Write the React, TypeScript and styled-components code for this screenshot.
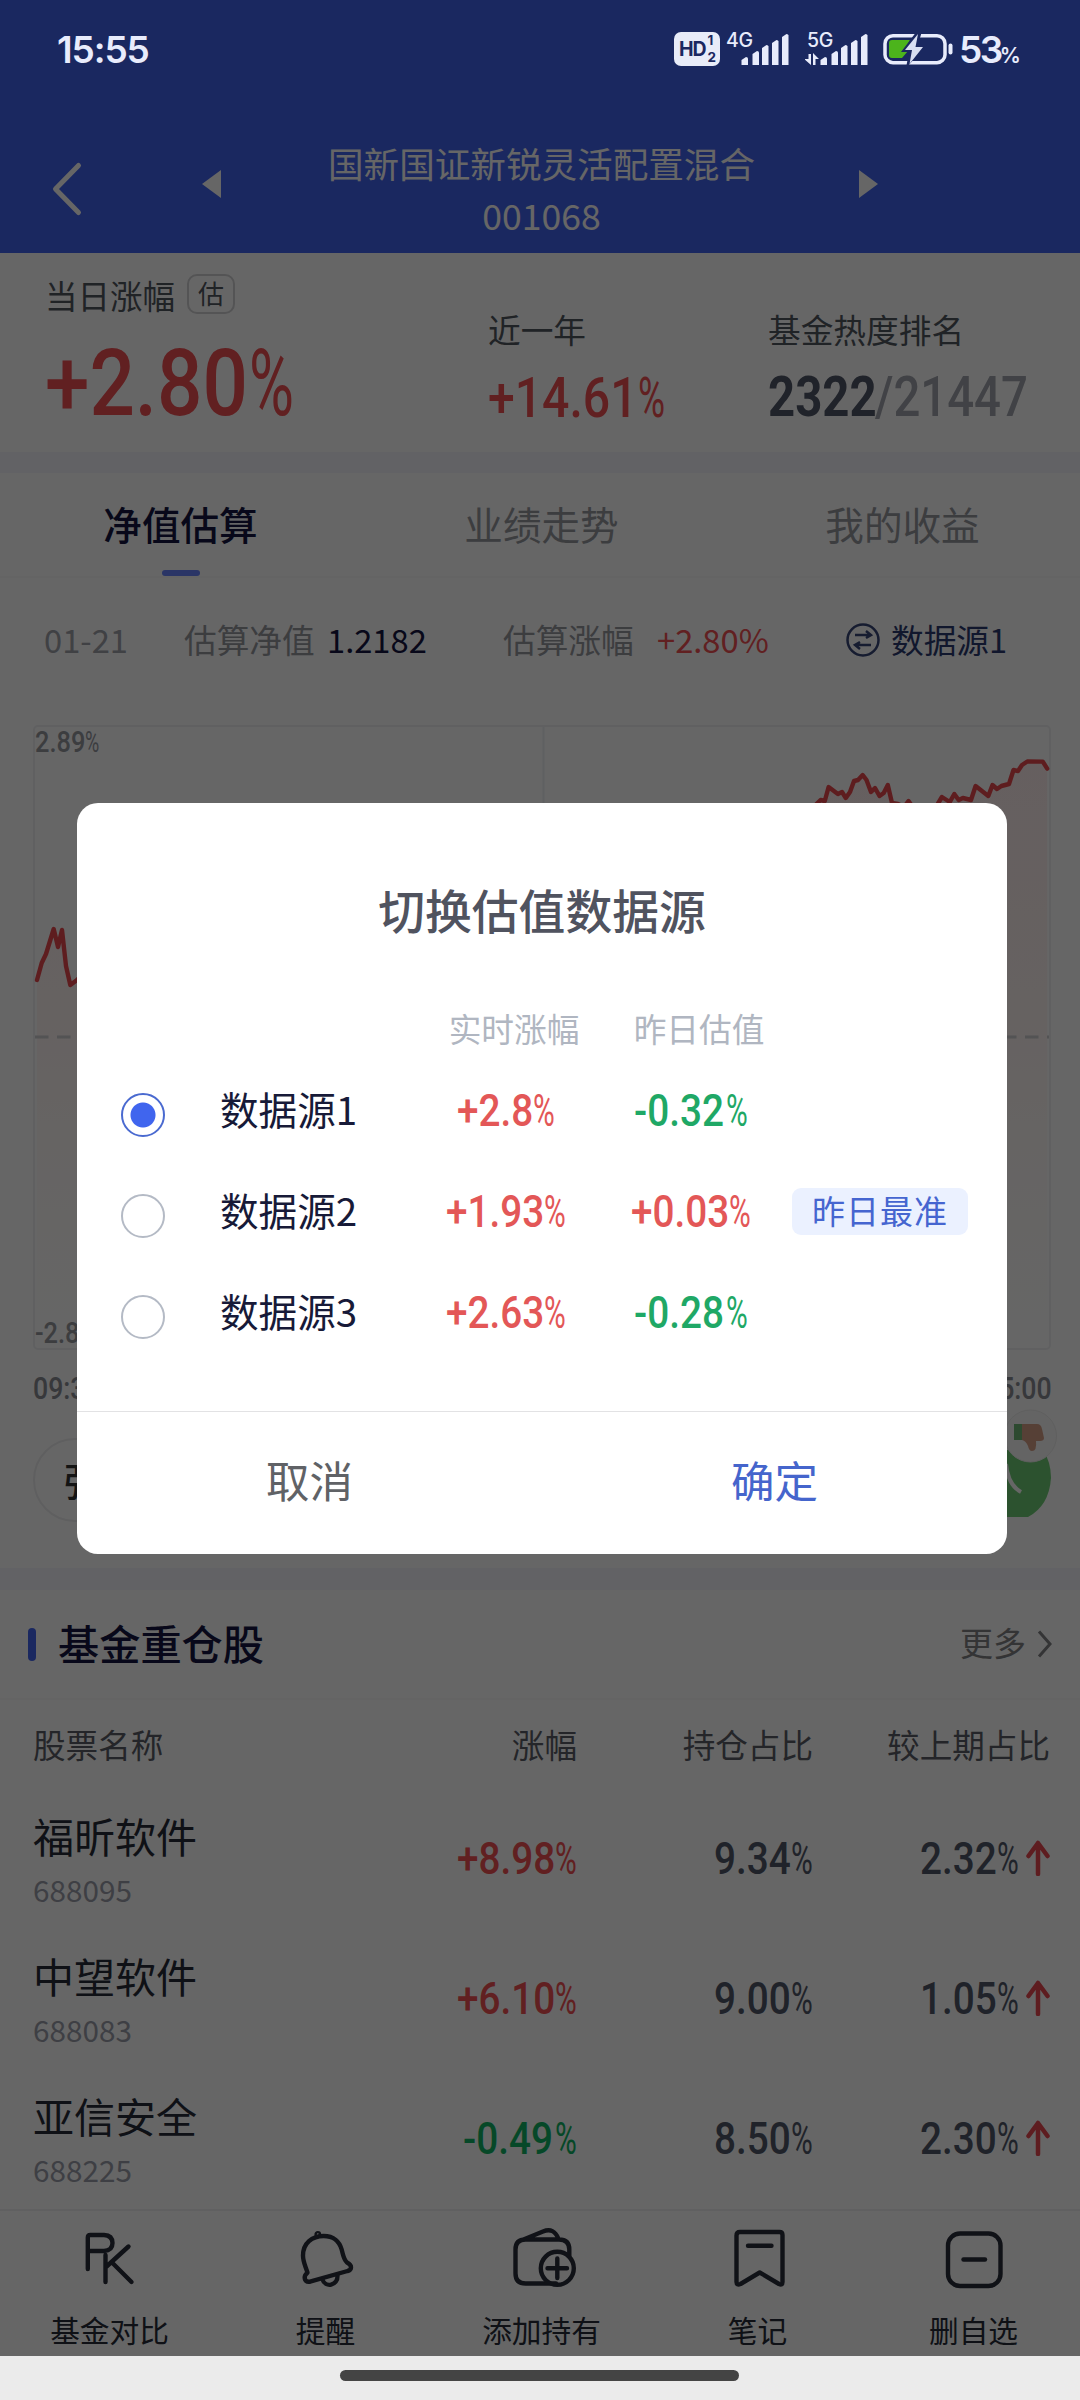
import React from "react";
import styled, { createGlobalStyle } from "styled-components";

const GlobalStyle = createGlobalStyle`
  * { box-sizing: border-box; }
  body { margin: 0; background: #ebebeb; }
`;

const cjk = `"Noto Sans CJK SC", "Noto Sans", sans-serif`;
const RED = "#f25054";
const GREEN = "#0fb464";

const Phone = styled.div`
  position: relative;
  width: 1080px;
  height: 2400px;
  overflow: hidden;
  font-family: ${cjk};
  background: #ebebeb;
  display: flex;
  flex-direction: column;
`;
const Page = styled.div`
  height: 2356px;
  background: #fff;
  display: flex;
  flex-direction: column;
`;
const Text = styled.span<{ $size: number; $color: string; $weight?: number }>`
  font-size: ${(p) => p.$size}px;
  color: ${(p) => p.$color};
  font-weight: ${(p) => p.$weight ?? 400};
  line-height: 1.2;
  white-space: nowrap;
`;

/* Condensed figures */
const advance = (s: string) =>
  [...s].reduce((w, c) => w + (c === "." ? 0.27 : c === "+" ? 0.56 : c === "-" ? 0.4 : c === ":" ? 0.25 : c === "/" ? 0.4 : c === "%" ? 0.735 : 0.565), 0);
const Figure = styled.span<{ $size: number; $color: string; $weight: number }>`
  display: inline-flex;
  gap: 0.02em;
  font-family: Roboto, sans-serif;
  font-size: ${(p) => p.$size}px;
  line-height: 1;
  font-weight: ${(p) => p.$weight};
  color: ${(p) => p.$color};
  white-space: nowrap;
`;
const Squeeze = styled.span<{ $w: number; $s: number; $light?: boolean }>`
  display: block;
  width: ${(p) => p.$w * p.$s}em;
  transform: scaleX(${(p) => p.$s});
  transform-origin: 0 50%;
  ${(p) => (p.$light ? "font-weight: 400;" : "")}
`;
function Num({ v, size = 45, color, weight = 500 }: { v: string; size?: number; color: string; weight?: number }) {
  const pct = v.endsWith("%");
  const body = pct ? v.slice(0, -1) : v;
  return (
    <Figure $size={size} $color={color} $weight={weight}>
      <Squeeze $w={advance(body)} $s={0.86}>{body}</Squeeze>
      {pct && <Squeeze $w={advance("%")} $s={0.66} $light>%</Squeeze>}
    </Figure>
  );
}

/* Header */
const Header = styled.header`
  height: 253px;
  background: #4364f0;
  display: flex;
  padding: 130px 0 0 51px;
`;
const BackIcon = styled.svg`
  width: 32px;
  height: 56px;
  margin-top: 31px;
`;
const FundNav = styled.div`
  display: flex;
  width: 676px;
  margin-left: 119px;
  justify-content: space-between;
`;
const Arrow = styled.svg`
  width: 19px;
  height: 28px;
  margin-top: 40px;
`;
const FundName = styled.div`
  display: flex;
  flex-direction: column;
  align-items: center;
  color: #fff;
  font-size: 35.6px;
  line-height: 52px;
  padding: 7px 0 0 3px;
`;

/* Summary */
const Summary = styled.section`
  height: 199px;
  display: grid;
  grid-template-columns: 443px 280px 1fr;
  padding-left: 45px;
`;
const SummaryCell = styled.div<{ $top: number }>`
  padding-top: ${(p) => p.$top}px;
  display: flex;
  flex-direction: column;
  align-items: flex-start;
`;
const LabelLine = styled.div`
  display: flex;
  align-items: center;
  height: 40px;
`;
const Tag = styled.span`
  width: 48px;
  height: 40px;
  margin-left: 12px;
  border: 2px solid #d2d2d4;
  border-radius: 10px;
  font-size: 26px;
  line-height: 34px;
  text-align: center;
  color: #52575f;
`;
const Value = styled.div<{ $mt: number }>`
  display: flex;
  margin-top: ${(p) => p.$mt}px;
`;
const Band = styled.div<{ $h: number }>`
  height: ${(p) => p.$h}px;
  flex: none;
  background: #f5f5fc;
`;

/* Tabs */
const Tabs = styled.nav`
  height: 105px;
  display: grid;
  grid-template-columns: repeat(3, 361px);
  border-bottom: 2px solid #f9f9fb;
`;
const Tab = styled.div<{ $on?: boolean }>`
  display: flex;
  flex-direction: column;
  align-items: center;
  justify-content: space-between;
  padding-top: 22px;
  font-size: 38.6px;
  line-height: 56px;
  font-weight: ${(p) => (p.$on ? 500 : 400)};
  color: ${(p) => (p.$on ? "#141641" : "#96989f")};
`;
const TabMark = styled.i`
  width: 38px;
  height: 6px;
  border-radius: 3px;
  background: #6986ff;
`;

/* Estimate */
const InfoRow = styled.div`
  height: 147px;
  display: grid;
  grid-template-columns: 140px 143px 176px 154px 189px 45px auto;
  align-items: start;
  justify-content: start;
  padding: 41px 0 0 44px;
`;
const SwapIcon = styled.svg`
  width: 34px;
  height: 34px;
  margin-top: 4px;
`;
const Chart = styled.div`
  width: 1018px;
  height: 625px;
  margin-left: 33px;
  border: 2px solid #f0f1f3;
  border-radius: 5px;
  display: grid;
`;
const ChartDrawing = styled.svg`
  grid-area: 1 / 1;
  width: 1014px;
  height: 621px;
  overflow: visible;
`;
const ChartLabels = styled.div`
  grid-area: 1 / 1;
  display: flex;
  flex-direction: column;
  justify-content: space-between;
  padding: 1px 0 0;
`;
const Times = styled.div`
  display: flex;
  justify-content: space-between;
  margin: 23px 29px 0 33px;
  height: 31px;
`;
const Votes = styled.div`
  display: flex;
  justify-content: space-between;
  margin: 34px 29px 0 33px;
  height: 130px;
`;
const UpVote = styled.div`
  width: 460px;
  height: 84px;
  border-radius: 42px;
  border: 2px solid #eeeeef;
  padding-left: 29px;
  font-size: 38.6px;
  font-weight: 500;
  line-height: 78px;
  color: #333;
`;
const DownVote = styled.svg`
  width: 120px;
  height: 110px;
  margin-right: -29px;
  margin-top: -29px;
`;

/* Holdings */
const SectionHead = styled.div`
  height: 110px;
  display: flex;
  align-items: center;
  padding: 0 28px 0 28px;
  border-bottom: 2px solid #f9f9fb;
`;
const Mark = styled.i`
  width: 8px;
  height: 33px;
  border-radius: 4px;
  margin-right: 22px;
  background: #4364f0;
`;
const More = styled.div`
  margin-left: auto;
  display: flex;
  align-items: center;
  gap: 11px;
`;
const Lift = styled.div<{ $by: number }>`
  display: flex;
  padding-bottom: ${(p) => p.$by}px;
`;
const Row = styled.div<{ $h: number }>`
  height: ${(p) => p.$h}px;
  display: grid;
  grid-template-columns: 301px 243px 236px 237px;
  padding-left: 33px;
  align-items: center;
`;
const Cell = styled.div<{ $left?: boolean }>`
  display: flex;
  align-items: center;
  justify-content: ${(p) => (p.$left ? "flex-start" : "flex-end")};
`;
const Stock = styled.div`
  display: flex;
  flex-direction: column;
  gap: 3px;
  height: 118px;
  padding-top: 6px;
`;
const StockName = styled.div`
  font-size: 41px;
  line-height: 60px;
  color: #262b37;
`;
const StockCode = styled.div`
  font-size: 29.7px;
  line-height: 44px;
  color: #9b9eaa;
`;
const UpIcon = styled.svg`
  width: 24px;
  height: 36px;
  margin-left: 7px;
`;

/* Bottom actions */
const Actions = styled.footer`
  height: 147px;
  margin-top: auto;
  border-top: 2px solid #f0f0f2;
  display: grid;
  grid-template-columns: repeat(5, 216px);
`;
const Action = styled.div`
  display: flex;
  flex-direction: column;
  align-items: center;
  padding-top: 17px;
  gap: 20px;
  font-size: 29.7px;
  line-height: 44px;
  color: #262b37;
`;
const ActionIcon = styled.svg`
  width: 72px;
  height: 60px;
  overflow: visible;
  fill: none;
  stroke: #2a2d3a;
  stroke-width: 4.4;
  stroke-linecap: round;
  stroke-linejoin: round;
`;
const ActionLabel = styled.span`
  padding-left: 3px;
`;

const HomeArea = styled.div`
  height: 44px;
  display: flex;
  justify-content: center;
  padding: 14px 2px 0 0;
`;
const HomeBar = styled.i`
  width: 399px;
  height: 11px;
  border-radius: 6px;
  background: #444;
`;

/* Layers over the page */
const Scrim = styled.div`
  position: absolute;
  inset: 0 0 44px;
  background: rgba(0, 0, 0, 0.6);
  display: flex;
  align-items: center;
  justify-content: center;
  padding-left: 4px;
`;
const Dialog = styled.div`
  width: 930px;
  height: 751px;
  border-radius: 21px;
  background: #fff;
  display: flex;
  flex-direction: column;
`;
const DialogTitle = styled.h2`
  margin: 72px 0 0;
  font-size: 46.8px;
  line-height: 68px;
  font-weight: 500;
  text-align: center;
  color: #50535f;
`;
const Sources = styled.div`
  display: grid;
  grid-template-columns: 44px 249px 184px 186px 1fr;
  grid-template-rows: 66px 101px 101px 101px;
  align-items: center;
  padding-left: 44px;
  margin-top: 51px;
`;
const ColumnName = styled.div`
  font-size: 32.7px;
  line-height: 40px;
  padding: 14px 0 0 16px;
  text-align: center;
  align-self: start;
  white-space: nowrap;
  color: #b0b6c1;
`;
const Radio = styled.i<{ $on?: boolean }>`
  width: 44px;
  height: 44px;
  margin-top: 9px;
  border-radius: 50%;
  border: 2.5px solid ${(p) => (p.$on ? "#4a6ad0" : "#b4bac5")};
  background: ${(p) => (p.$on ? "radial-gradient(circle, #4065ee 12px, #fff 13px)" : "#fff")};
`;
const SourceName = styled.div`
  font-size: 38.6px;
  line-height: 56px;
  padding: 0 0 4px 55px;
  color: #171a38;
`;
const SourceValue = styled.div`
  display: flex;
  justify-content: center;
`;
const Badge = styled.div`
  width: 176px;
  height: 47px;
  margin-left: 8px;
  border-radius: 9px;
  background: #ebf1ff;
  color: #4565d0;
  font-size: 33px;
  letter-spacing: 1px;
  line-height: 44px;
  text-align: center;
`;
const Buttons = styled.div`
  flex: 1;
  margin-top: auto;
  display: grid;
  grid-template-columns: 1fr 1fr;
  border-top: 1px solid #e2e2e4;
  max-height: 143px;
`;
const Button = styled.button<{ $primary?: boolean }>`
  border: 0;
  padding: 0 0 6px;
  background: none;
  font: 400 43.5px ${cjk};
  color: ${(p) => (p.$primary ? "#4565cc" : "#606266")};
`;

const StatusBar = styled.div`
  position: absolute;
  inset: 0 0 auto;
  height: 100px;
  display: flex;
  align-items: flex-start;
  padding: 32px 60px 0 57px;
  color: #e8ecfc;
  font-family: Inter, sans-serif;
  font-weight: 600;
`;
const Clock = styled.span`
  font-size: 37px;
  line-height: 36px;
  letter-spacing: -1.1px;
  margin-right: auto;
`;
const HdBadge = styled.span`
  width: 46px;
  height: 34px;
  border-radius: 7px;
  background: #e8ecf8;
  color: #1b2860;
  display: flex;
  align-items: center;
  justify-content: center;
  font-size: 19.5px;
  letter-spacing: -1px;
  font-weight: 700;
`;
const HdSlots = styled.span`
  display: flex;
  flex-direction: column;
  font-size: 13.5px;
  line-height: 17px;
  margin-left: 2px;
`;
const Signal = styled.span<{ $ml: number }>`
  display: grid;
  width: 63px;
  margin-left: ${(p) => p.$ml}px;
`;
const Net = styled.span<{ $ml?: number }>`
  grid-area: 1 / 1;
  font-size: 19.5px;
  line-height: 16px;
  letter-spacing: -0.4px;
  font-weight: 500;
  padding-left: ${(p) => p.$ml ?? 0}px;
`;
const Bars = styled.svg`
  grid-area: 1 / 1;
  width: 66px;
  height: 34px;
  fill: #e8ecfc;
`;
const Battery = styled.svg`
  width: 72px;
  height: 34px;
  margin-left: 13px;
`;
const Percent = styled.span`
  font-size: 37px;
  line-height: 36px;
  margin-left: 6px;
  width: 61px;
  letter-spacing: -2.6px;
  white-space: nowrap;
  small { font-size: 21px; letter-spacing: 0; margin-left: -1px; }
`;

const barX = [18, 29, 38.5, 48.5, 58.5];
const barTop = [25, 19, 13, 8, 2];
function SignalBars() {
  return (
    <>
      {barX.map((x, i) => (
        <path key={x} d={`M${x - 2.5} 33V${barTop[i] + 3}L${x + 2} ${barTop[i]}Q${x + 4} ${barTop[i]} ${x + 4} ${barTop[i] + 1.5}V33Z`} />
      ))}
    </>
  );
}

/* Chart coordinates are measured from the screen's left edge and the plot's top */
const trend: [number, number][] = [
  [37, 979], [41.7, 962], [46, 953], [53.7, 928], [58, 946], [62, 929], [66, 965], [70.3, 984], [77, 979], [120, 940], [200, 960], [300, 900], [420, 880],
  [560, 850], [700, 870], [790, 830], [816.5, 803], [820.6, 799], [824.8, 800], [828.6, 786], [837.9, 793], [842, 791], [845.8, 797], [850, 791], [854, 780],
  [858, 779], [862.7, 774], [866.5, 779], [871, 791], [875, 787], [879.5, 795], [883.7, 792], [887.8, 784], [892, 802], [898, 803], [904, 806],
  [908.5, 800], [912, 805], [925, 815], [937.7, 803], [941.9, 796], [949.8, 801], [954.3, 793], [958.7, 799], [962.9, 797], [971, 799], [975.6, 785],
  [988.3, 795], [992.5, 784], [997, 788], [1001.4, 785], [1009, 783], [1013.5, 769], [1018, 770], [1022, 764], [1027.3, 760.5], [1042.8, 760.6], [1047.2, 767.7],
];
const line = trend.map(([x, y], i) => `${i ? "L" : "M"}${x - 35} ${y - 726}`).join("");

const stocks = [
  { name: "福昕软件", code: "688095", change: "+8.98%", share: "9.34%", diff: "2.32%" },
  { name: "中望软件", code: "688083", change: "+6.10%", share: "9.00%", diff: "1.05%" },
  { name: "亚信安全", code: "688225", change: "-0.49%", share: "8.50%", diff: "2.30%" },
];
const sources = [
  { name: "数据源1", now: "+2.8%", last: "-0.32%", on: true },
  { name: "数据源2", now: "+1.93%", last: "+0.03%", best: true },
  { name: "数据源3", now: "+2.63%", last: "-0.28%" },
];
const tone = (v: string) => (v[0] === "-" ? "#1fa866" : "#e35757");

const actions = [
  {
    label: "基金对比",
    icon: <path d="M15.800 41V9.500Q15.800 7 18.300 7H32Q40.500 7.500 40.500 15T32 23H16M33.500 27V54M56.500 18.500L34 39M40 34.500L59.500 54" />,
  },
  {
    label: "提醒",
    icon: (
      <>
        <path d="M19.5 44.7C17.5 38 15 34 15 27.5C15 15 24 8 35.7 8C46 8 51.500 14 53.500 21C55.500 28 55.500 31 59 34.500C65 37.500 63.500 42 59.500 43L22 53.700C16 54.500 15 48 19.500 44.700Z" />
        <path d="M34.5 51.500C37 60 50 58 49.500 47.500" />
        <circle cx="29.800" cy="6.300" r="1.200" />
      </>
    ),
  },
  {
    label: "添加持有",
    icon: (
      <>
        <path d="M65.300 28V21.500Q65.300 11.500 55 11.500H21.500Q11.500 11.500 11.500 21.500V45.500Q11.500 55.500 21.500 55.500H52M19.500 11.500L39 3.500Q50-1 54.500 11" />
        <circle cx="53.300" cy="40.300" r="16.500" />
        <path d="M43.500 40.300H63M53.300 30.500V50" />
      </>
    ),
  },
  { label: "笔记", icon: <path d="M20 4H59.500Q62.500 4 62.500 7V54Q62.500 57.500 59 56L39.700 44.500L20.500 56Q16.500 57.500 16.500 54V7.500Q16.500 4 20 4ZM28 17.700H51.500" /> },
  {
    label: "删自选",
    icon: (
      <>
        <rect x="12" y="5.500" width="52.500" height="52.500" rx="12" />
        <path d="M27.500 31.500H49" />
      </>
    ),
  },
];

export default function App() {
  return (
    <Phone>
      <GlobalStyle />
      <Page>
        <Header>
          <BackIcon viewBox="0 0 32 56">
            <path d="M27.500 4.500L4.500 28L27.500 51.500" fill="none" stroke="#fff" strokeWidth="5" strokeLinecap="round" strokeLinejoin="round" />
          </BackIcon>
          <FundNav>
            <Arrow viewBox="0 0 19 28"><path d="M19 0V28L0 14Z" fill="#fff" /></Arrow>
            <FundName>
              <span>国新国证新锐灵活配置混合</span>
              <span>001068</span>
            </FundName>
            <Arrow viewBox="0 0 19 28"><path d="M0 0V28L19 14Z" fill="#fff" /></Arrow>
          </FundNav>
        </Header>

        <Summary>
          <SummaryCell $top={21}>
            <LabelLine>
              <Text $size={32.5} $color="#52575f">当日涨幅</Text>
              <Tag>估</Tag>
            </LabelLine>
            <Value $mt={23}><Num v="+2.80%" size={93} color={RED} /></Value>
          </SummaryCell>
          <SummaryCell $top={56}>
            <LabelLine><Text $size={32.7} $color="#52575f">近一年</Text></LabelLine>
            <Value $mt={21}><Num v="+14.61%" size={56} color={RED} /></Value>
          </SummaryCell>
          <SummaryCell $top={56}>
            <LabelLine><Text $size={32.7} $color="#52575f">基金热度排名</Text></LabelLine>
            <Value $mt={21}>
              <Num v="2322" size={55} color="#525869" weight={700} />
              <Num v="/21447" size={55} color="#a3a6ae" />
            </Value>
          </SummaryCell>
        </Summary>
        <Band $h={21} />

        <Tabs>
          <Tab $on>净值估算<TabMark /></Tab>
          <Tab>业绩走势</Tab>
          <Tab>我的收益</Tab>
        </Tabs>

        <InfoRow>
          <Text $size={32.7} $color="#a0a2aa">01-21</Text>
          <Text $size={32.7} $color="#96989f">估算净值</Text>
          <Text $size={32.7} $color="#141641">1.2182</Text>
          <Text $size={32.7} $color="#96989f">估算涨幅</Text>
          <Text $size={32.7} $color={RED}>+2.80%</Text>
          <SwapIcon viewBox="0 0 34 34" fill="none" stroke="#384678" strokeWidth="2.5">
            <circle cx="17" cy="17" r="15.500" />
            <path d="M9 12H24M20 8L25 12L20 15M25 22H10M14 19L9 22L14 26" />
          </SwapIcon>
          <Text $size={32.7} $color="#2c3a70">数据源1</Text>
        </InfoRow>

        <Chart>
          <ChartDrawing viewBox="0 0 1014 621">
            <defs>
              <linearGradient id="fade" x1="0" y1="0" x2="0" y2="1">
                <stop offset="0" stopColor="#f25054" stopOpacity="0.1" />
                <stop offset="0.450" stopColor="#f2806a" stopOpacity="0.080" />
                <stop offset="1" stopColor="#f2c080" stopOpacity="0" />
              </linearGradient>
            </defs>
            <path d="M508.500 0V621" stroke="#eeeff3" strokeWidth="2" />
            <path d={`${line}V621H2Z`} fill="url(#fade)" />
            <path d="M0 310H1014" stroke="#d0d0d2" strokeWidth="3" strokeDasharray="13.500 8.500" />
            <path d={line} fill="none" stroke="#ea4a4e" strokeWidth="4.400" strokeLinecap="round" strokeLinejoin="round" />
          </ChartDrawing>
          <ChartLabels>
            <Num v="2.89%" size={29.5} color="#96989f" />
            <Num v="-2.89%" size={29.5} color="#96989f" />
          </ChartLabels>
        </Chart>
        <Times>
          <Num v="09:30" size={31} color="#8a8c94" />
          <Num v="15:00" size={31} color="#8a8c94" />
        </Times>
        <Votes>
          <UpVote>强</UpVote>
          <DownVote viewBox="960 1409 120 110">
            <path d="M960 1450H1043Q1051 1462 1051 1478Q1049 1506 1028 1517H960Z" fill="#6fce76" />
            <path d="M1006 1464Q1008 1485 1021 1492" fill="none" stroke="#fff" strokeWidth="4" />
            <circle cx="1030.500" cy="1436" r="26" fill="#fafafa" stroke="#eee" strokeWidth="1" />
            <path d="M1014 1424H1022V1440H1014Z" fill="#70b878" />
            <path d="M1022 1424H1037Q1041 1424 1042 1429L1044 1438Q1044 1441 1040 1441H1036Q1037 1451 1032 1451Q1029 1451 1028 1446Q1026 1441 1022 1440Z" fill="#d8a088" />
          </DownVote>
        </Votes>
        <Band $h={22} />

        <SectionHead>
          <Mark />
          <Lift $by={3}><Text $size={41.2} $color="#141641" $weight={500}>基金重仓股</Text></Lift>
          <More>
            <Lift $by={2}><Text $size={33} $color="#828386">更多</Text></Lift>
            <svg width="15" height="28" viewBox="0 0 15 28"><path d="M2 1.500L13 14L2 26.500" fill="none" stroke="#828386" strokeWidth="3" /></svg>
          </More>
        </SectionHead>
        <Row $h={88}>
          {["股票名称", "涨幅", "持仓占比", "较上期占比"].map((t, i) => (
            <Cell key={t} $left={i === 0}><Text $size={32.6} $color="#5a5d68">{t}</Text></Cell>
          ))}
        </Row>
        {stocks.map((s) => (
          <Row $h={140} key={s.code}>
            <Stock>
              <StockName>{s.name}</StockName>
              <StockCode>{s.code}</StockCode>
            </Stock>
            <Cell><Num v={s.change} color={s.change[0] === "-" ? GREEN : RED} /></Cell>
            <Cell><Num v={s.share} color="#525869" /></Cell>
            <Cell>
              <Num v={s.diff} color="#525869" />
              <UpIcon viewBox="0 0 24 36">
                <path d="M12 34V3M2.500 16L12 3L21.500 16" fill="none" stroke="#ea4a50" strokeWidth="4.500" strokeLinecap="round" strokeLinejoin="round" />
              </UpIcon>
            </Cell>
          </Row>
        ))}
        <Actions>
          {actions.map((a) => (
            <Action key={a.label}>
              <ActionIcon viewBox="0 0 72 60">{a.icon}</ActionIcon>
              <ActionLabel>{a.label}</ActionLabel>
            </Action>
          ))}
        </Actions>
      </Page>
      <HomeArea><HomeBar /></HomeArea>

      <Scrim>
        <Dialog>
          <DialogTitle>切换估值数据源</DialogTitle>
          <Sources>
            <span /><span />
            <ColumnName>实时涨幅</ColumnName>
            <ColumnName>昨日估值</ColumnName>
            <span />
            {sources.map((s) => (
              <React.Fragment key={s.name}>
                <Radio $on={s.on} />
                <SourceName>{s.name}</SourceName>
                <SourceValue><Num v={s.now} color={tone(s.now)} /></SourceValue>
                <SourceValue><Num v={s.last} color={tone(s.last)} /></SourceValue>
                {s.best ? <Badge>昨日最准</Badge> : <span />}
              </React.Fragment>
            ))}
          </Sources>
          <Buttons>
            <Button>取消</Button>
            <Button $primary>确定</Button>
          </Buttons>
        </Dialog>
      </Scrim>

      <StatusBar>
        <Clock>15:55</Clock>
        <HdBadge>HD<HdSlots><span>1</span><span>2</span></HdSlots></HdBadge>
        <Signal $ml={6}>
          <Net>4G</Net>
          <Bars viewBox="0 0 66 34"><SignalBars /></Bars>
        </Signal>
        <Signal $ml={16}>
          <Net $ml={2}>5G</Net>
          <Bars viewBox="0 0 66 34">
            <SignalBars />
            <path d="M3.500 22H6V33L-1 27H3.500ZM8 33V21L14 27H10.500V33Z" />
          </Bars>
        </Signal>
        <Battery viewBox="0 0 72 34">
          <rect x="4" y="3.700" width="60" height="27" rx="8" fill="none" stroke="#e8ecfc" strokeWidth="3.500" />
          <path d="M11 8H29L23 19H27L21 26H11Q8 26 8 23V11Q8 8 11 8Z" fill="#4cb41c" />
          <path d="M36-1L20 20H28L25 36L46 13H37L41-1Z" fill="#1b2860" />
          <path d="M37 2L24 18H31L28.500 32L42 15H34.500Z" fill="#d9dff2" />
          <rect x="67.500" y="11.500" width="4" height="11" rx="2" fill="#e8ecfc" />
        </Battery>
        <Percent>53<small>%</small></Percent>
      </StatusBar>
    </Phone>
  );
}
